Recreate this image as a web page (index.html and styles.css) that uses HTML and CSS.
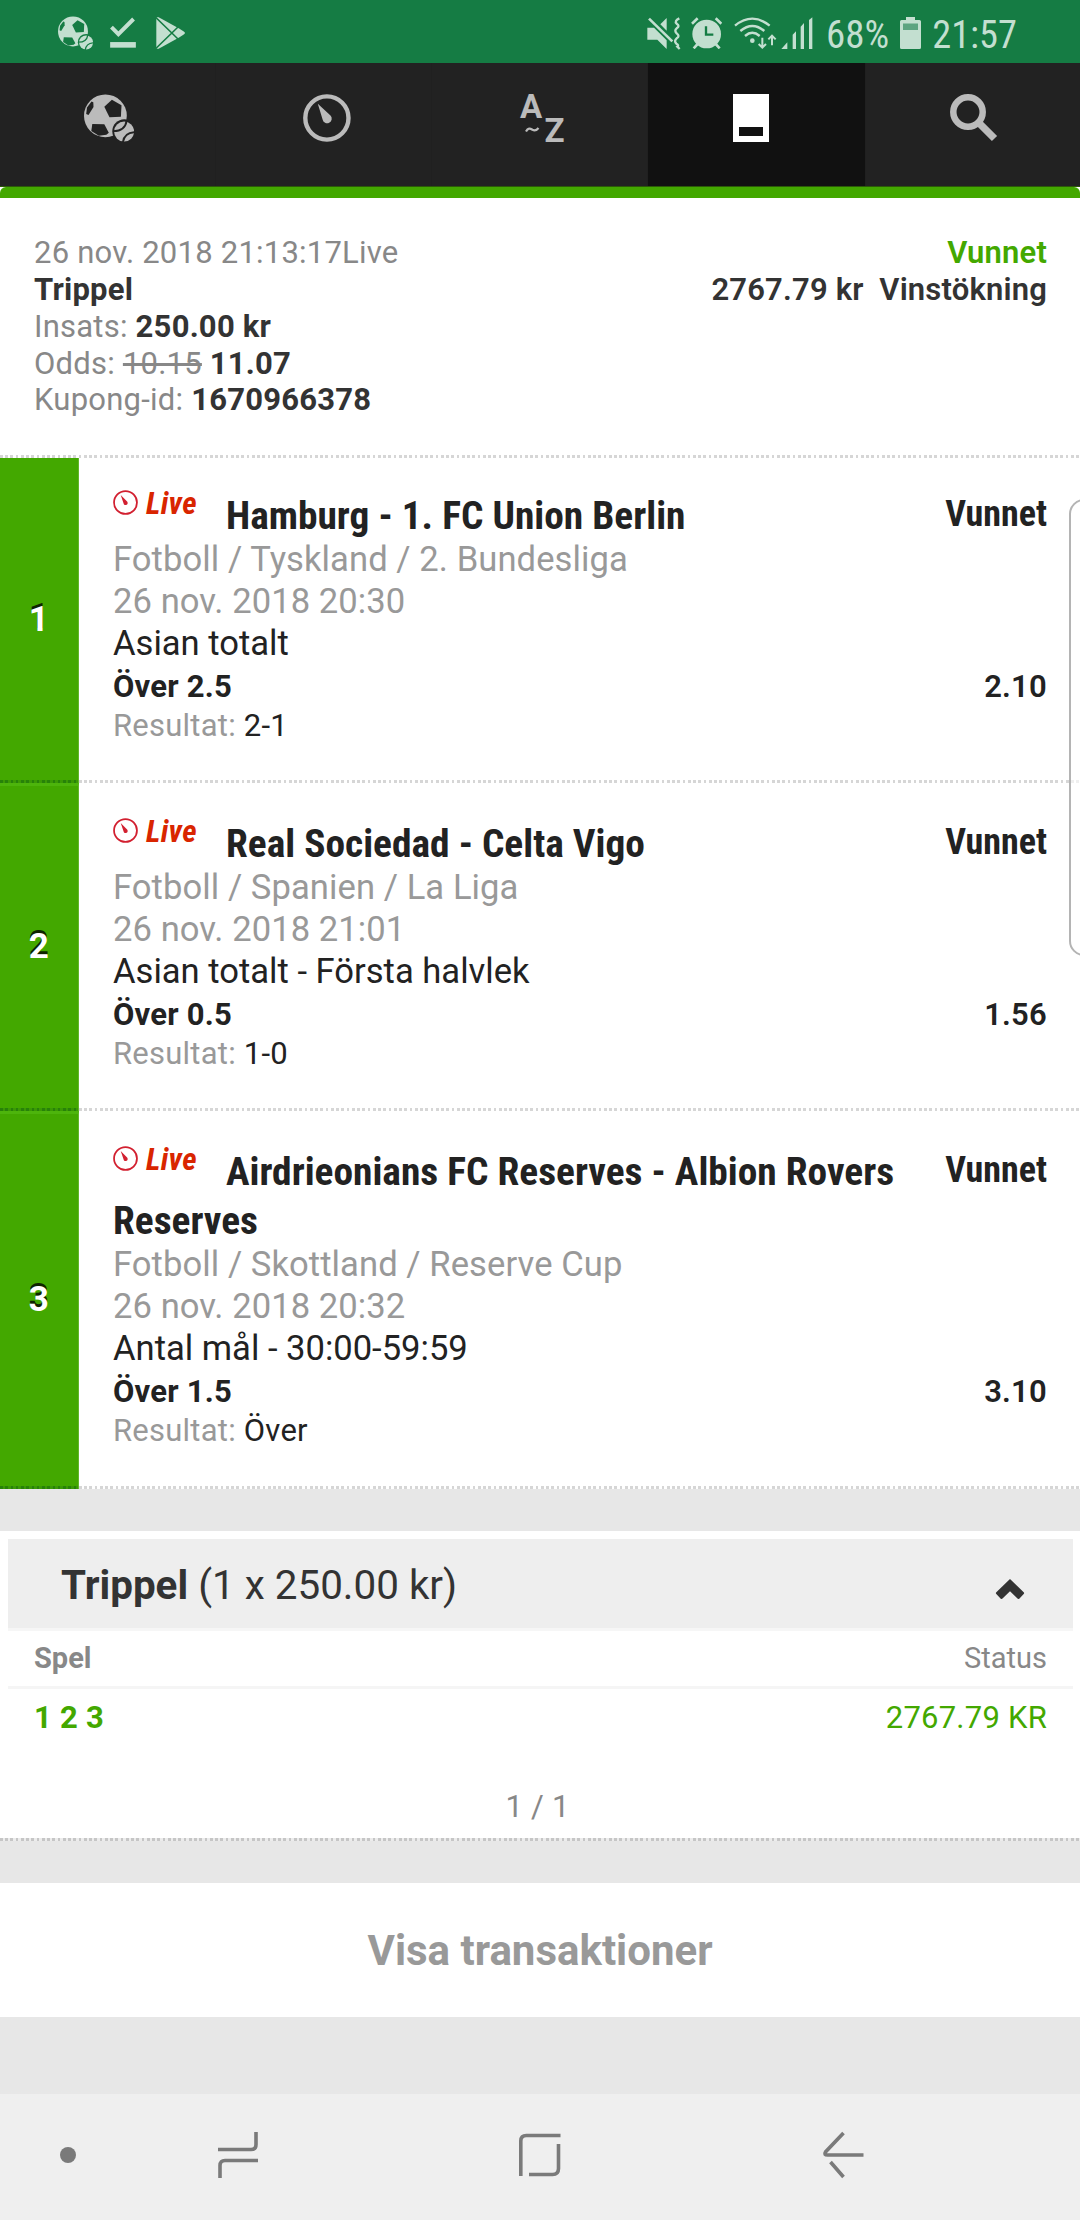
FILE: index.html
```html
<!DOCTYPE html>
<html lang="sv">
<head>
<meta charset="utf-8">
<title>Kupong</title>
<link rel="stylesheet" href="styles.css">
</head>
<body>
<svg class="defs" width="0" height="0">
  <symbol id="balls" viewBox="0 0 50 48">
    <circle cx="21.4" cy="21.8" r="21.4" fill="currentColor"/>
    <g class="cut">
      <path d="M27.9 5.7 37.5 11.3 36.9 22.7 25.5 23.3 20.3 12.7Z"/>
      <path d="M7.5 7.5 9.3 8.3 9.5 13 4.5 21 2.2 20 3 13.5Z"/>
      <path d="M8.3 30 20.3 30.3 24.8 38.7 22.4 40.7 14.8 41.7 7.3 37Z"/>
      <circle cx="40.3" cy="37.3" r="12"/>
    </g>
    <circle cx="40.1" cy="37.6" r="10" fill="currentColor"/>
    <path class="cut-line" d="M29.5 37.2Q41 37 42.6 27M38.8 49Q40 38.5 51 38.2" stroke-width="1.8"/>
  </symbol>
  <symbol id="gauge" viewBox="0 0 48 48">
    <circle cx="23.9" cy="24" r="21.6" fill="none" stroke="currentColor" stroke-width="4.4"/>
    <path d="M14.8 9.7 27.5 21.6A4.6 4.6 0 1 1 19.6 25.5Z" fill="currentColor"/>
  </symbol>
  <symbol id="gauge-thin" viewBox="0 0 48 48">
    <circle cx="24" cy="24" r="22" fill="none" stroke="currentColor" stroke-width="3.4"/>
    <path d="M14.8 9.7 26.6 21.8A4 4 0 1 1 20.2 25.5Z" fill="currentColor"/>
  </symbol>
</svg>

<header class="status">
  <svg class="s-balls" width="35" height="34"><use href="#balls"/></svg>
  <svg class="s-check" width="26" height="31" viewBox="180 36 78 94"><path d="M184 67 205 88 251 42" fill="none" stroke="currentColor" stroke-width="12"/><path d="M180 112h78v17h-78z" fill="currentColor"/></svg>
  <svg class="s-play" width="29" height="32" viewBox="317 35 87 96"><path d="M318 36H325L385 69Q404 80 404 83 404 86 385 97L325 130H318Z" fill="currentColor"/><path class="cut-line" d="M314 34 390 108M314 132 390 58" stroke-width="4.5"/></svg>
  <div class="s-right">
    <svg class="s-mute" width="34" height="33" viewBox="21 34 102 99"><g fill="currentColor"><path d="M22 66H42L80 104V130L52 102H22Z"/><path d="M61 56 80 37V75Z"/></g><g fill="none" stroke="currentColor"><path d="M27 39 97 107" stroke-width="8"/><path d="M118 38Q102 46 110 54 121 61 110 68 102 75 110 83 121 91 110 98 101 106 109 114 118 119 112 123L119 130" stroke-width="7"/></g></svg>
    <svg class="s-alarm" width="31" height="32" viewBox="154 35 93 96"><circle cx="201" cy="86" r="43" fill="currentColor"/><path d="M157 55 174 39M228 39 245 55M174 116 162 129M228 116 240 129" stroke="currentColor" stroke-width="8"/><path class="cut-line" d="M199 63V88H221" stroke-width="7"/></svg>
    <svg class="s-wifi" width="43" height="33" viewBox="284 34 129 99"><circle cx="339" cy="105" r="7" fill="currentColor"/><g fill="none" stroke="currentColor" stroke-width="7"><path d="M287 60Q339 18 391 60M303 76Q339 46 375 76M317 91Q339 72 361 91"/><path d="M369 96V126M358 115 369 126 380 115M398 119V90M387 101 398 90 409 101" stroke-width="6"/></g></svg>
    <svg class="s-signal" width="32" height="33" viewBox="427 35 96 99"><path d="M428 131 446 111V131ZM462 88 472 78V131H462ZM486 64 496 53V131H486ZM511 44 521 36V131H511Z" fill="currentColor"/></svg>
    <span class="s-pct">68%</span>
    <svg class="s-batt" width="21" height="32" viewBox="0 0 21 32"><path d="M6 0H15V3H19.5Q21 3 21 4.500V30.500Q21 32 19.500 32H1.500Q0 32 0 30.500V4.500Q0 3 1.500 3H6Z" fill="currentColor"/><path d="M3 6.500H18V13H3Z" fill="#5da481"/></svg>
    <span class="s-time">21:57</span>
  </div>
</header>

<nav class="tabs">
  <a class="tab t-ball"><svg width="50" height="48"><use href="#balls"/></svg></a>
  <a class="tab t-live"><svg width="48" height="48"><use href="#gauge"/></svg></a>
  <a class="tab t-az"><svg width="56" height="64" viewBox="-5 -8 56 64"><text x="1" y="24">A</text><text x="25.500" y="47.500">Z</text><path d="M7 37.500C9 33.500 11 34.200 13.500 35.800 16 37.300 17.500 36.500 19.500 34" fill="none" stroke="currentColor" stroke-width="2.200"/></svg></a>
  <a class="tab t-slip active"><svg width="36" height="48" viewBox="0 0 36 48"><path d="M0 0H36V48H0ZM6 33V42H30V33Z" fill="currentColor" fill-rule="evenodd"/></svg></a>
  <a class="tab t-search"><svg width="48" height="48" viewBox="0 0 48 48"><circle cx="18" cy="18" r="14.700" fill="none" stroke="currentColor" stroke-width="6.500"/><path d="M28 28 44.500 44.500" stroke="currentColor" stroke-width="7.400"/></svg></a>
</nav>
<div class="strip"><div class="strip-bar"></div></div>

<section class="summary">
  <div class="sum-left">
    <div>26 nov. 2018 21:13:17Live</div>
    <div><b>Trippel</b></div>
    <div>Insats: <b>250.00 kr</b></div>
    <div>Odds: <s>10.15</s> <b>11.07</b></div>
    <div>Kupong-id: <b>1670966378</b></div>
  </div>
  <div class="sum-right">
    <div class="won">Vunnet</div>
    <div>2767.79 kr&nbsp; Vinstökning</div>
  </div>
</section>
<div class="dots"></div>

<main class="bets">
  <article class="bet">
    <div class="num">1</div>
    <div class="info">
      <div class="head"><h2><span class="live"><svg width="25" height="25"><use href="#gauge-thin"/></svg><i>Live</i></span>Hamburg - 1. FC Union Berlin</h2><span class="res">Vunnet</span></div>
      <div class="meta">Fotboll / Tyskland / 2. Bundesliga</div>
      <div class="meta">26 nov. 2018 20:30</div>
      <div class="market">Asian totalt</div>
      <div class="pick"><span>Över 2.5</span><span>2.10</span></div>
      <div class="result">Resultat: <span>2-1</span></div>
    </div>
  </article>
  <article class="bet">
    <div class="num">2</div>
    <div class="info">
      <div class="head"><h2><span class="live"><svg width="25" height="25"><use href="#gauge-thin"/></svg><i>Live</i></span>Real Sociedad - Celta Vigo</h2><span class="res">Vunnet</span></div>
      <div class="meta">Fotboll / Spanien / La Liga</div>
      <div class="meta">26 nov. 2018 21:01</div>
      <div class="market">Asian totalt - Första halvlek</div>
      <div class="pick"><span>Över 0.5</span><span>1.56</span></div>
      <div class="result">Resultat: <span>1-0</span></div>
    </div>
  </article>
  <article class="bet">
    <div class="num">3</div>
    <div class="info">
      <div class="head"><h2><span class="live"><svg width="25" height="25"><use href="#gauge-thin"/></svg><i>Live</i></span>Airdrieonians FC Reserves - Albion Rovers Reserves</h2><span class="res">Vunnet</span></div>
      <div class="meta">Fotboll / Skottland / Reserve Cup</div>
      <div class="meta">26 nov. 2018 20:32</div>
      <div class="market">Antal mål - 30:00-59:59</div>
      <div class="pick"><span>Över 1.5</span><span>3.10</span></div>
      <div class="result">Resultat: <span>Över</span></div>
    </div>
  </article>
</main>

<section class="combo">
  <div class="panel">
    <div class="panel-head"><div><b>Trippel</b> (1 x 250.00 kr)</div>
      <svg width="30" height="21" viewBox="0 0 30 21"><path d="M15 0 28.700 13.200Q29.600 14 28.700 15L24.500 19.500Q23.500 20.600 22.500 19.600L15 12.300 7.500 19.600Q6.500 20.600 5.500 19.500L1.300 15Q.4 14 1.300 13.200Z" fill="#333"/></svg>
    </div>
    <div class="cols"><b>Spel</b><span>Status</span></div>
    <div class="line"><b>1 2 3</b><span>2767.79 KR</span></div>
    <div class="pager">1 / 1</div>
  </div>
</section>
<div class="dots grey"></div>

<button class="trans">Visa transaktioner</button>

<footer class="softkeys">
  <svg class="k-dot" width="16" height="16" viewBox="0 0 16 16"><circle cx="8" cy="8" r="8" fill="currentColor"/></svg>
  <svg class="k-recent" width="42" height="48" viewBox="0 0 42 48"><path d="M1 18.500H34Q39 18.500 39 13.500V1M41 29.500H8Q3 29.500 3 34.500V47"/></svg>
  <svg class="k-home" width="44" height="46" viewBox="0 0 44 46"><path d="M2.800 44V9Q2.800 3.500 8.300 3.500H42.500M11 42.500H34.500Q40.500 42.500 40.500 36.500V12"/></svg>
  <svg class="k-back" width="42" height="48" viewBox="0 0 42 48"><path d="M21.500 2 3.500 21Q1.500 24 5.500 24H41.500M8.500 31 21.500 46"/></svg>
</footer>
<div class="edge"></div>
</body>
</html>
```
FILE: styles.css
```css
* { box-sizing: border-box; }
body {
  margin: 0;
  width: 1080px;
  height: 2220px;
  display: flex;
  flex-direction: column;
  background: #e7e7e7;
  font-family: Roboto, "Liberation Sans", sans-serif;
  font-size: 31px;
  letter-spacing: 0.23px;
  color: #333;
  position: relative;
  overflow: hidden;
}
body > * { flex: none; }
svg { display: block; flex: none; }
.defs { position: absolute; }
.cut { fill: var(--bg); }
.cut-line { fill: none; stroke: var(--bg); }

/* system status bar */
.status {
  --bg: #157c44;
  height: 63px;
  padding: 16px 63px 0 58px;
  display: flex;
  align-items: flex-start;
  background: #157c44;
  color: #c3dfd0;
}
.s-check { margin: 1px 0 0 17px; }
.s-play { margin: 1px 0 0 20px; }
.s-right { margin-left: auto; display: flex; align-items: flex-start; }
.s-mute, .s-alarm, .s-wifi, .s-signal, .s-batt { margin-top: 1px; }
.s-alarm { margin-left: 10px; }
.s-wifi { margin-left: 12px; }
.s-signal { margin-left: 4px; }
.s-pct, .s-time {
  font-size: 39px;
  font-stretch: 75%;
  letter-spacing: 0;
  line-height: 38px;
}
.s-pct { margin-left: 13px; }
.s-batt { margin-left: 11px; }
.s-time { margin-left: 11px; font-size: 38.4px; }

/* section tabs */
.tabs { display: flex; height: 123px; background: #222; color: #bbb; }
.tab {
  --bg: #222;
  flex: none;
  width: 216px;
  display: flex;
  justify-content: center;
  align-items: flex-start;
  padding-top: 31px;
  border-right: 1px solid #202020;
}
.tab:last-child { width: 214px; border-right: 0; }
.tab.active { width: 218px; background: #111; color: #fff; }
.t-ball { padding-left: 3px; }
.t-live { padding-left: 6px; }
.t-az { padding: 23px 0 0 4px; }
.t-slip { padding-right: 11px; }
.t-search { padding-left: 2px; }
.t-az text { font: 700 33px Roboto, sans-serif; fill: currentColor; letter-spacing: 0; }
.strip { background: #fff; height: 12px; border-top: 1px solid #2c5a08; }
.strip-bar { height: 11px; background: #43a800; border-radius: 6px 6px 0 0; }

/* coupon summary */
.summary {
  height: 257px;
  padding: 37.2px 33px 0 34px;
  display: flex;
  justify-content: space-between;
  background: #fff;
  color: #888;
  line-height: 36.8px;
}
.summary b { color: #333; }
.sum-right { text-align: right; color: #333; font-weight: 600; letter-spacing: 0.18px; }
.won { color: #43a800; }
.dots {
  height: 3px;
  background: repeating-linear-gradient(90deg, #d6d6d6 0 2.62px, #fff 2.62px 5.25px);
}
.dots.grey { background: repeating-linear-gradient(90deg, #c6c6c6 0 2.62px, #ececec 2.62px 5.25px); }

/* bets */
.bet { display: flex; background: #fff; height: 325px; }
.bet + .bet { height: 328px; }
.bet:last-child { height: 378px; }
.num {
  width: 79px;
  display: flex;
  align-items: center;
  justify-content: center;
  padding-bottom: 3px;
  background:
    repeating-linear-gradient(90deg, #278209 0 2.62px, #3a9a04 2.62px 5.25px) bottom / 100% 3px no-repeat,
    #43a800;
  border-right: 1px solid #62b62c;
  color: #fff;
  font-size: 35px;
  font-weight: 700;
  text-shadow: 0 -3px 0 rgba(0, 0, 0, 0.8);
}
.bet + .bet .num { border-top: 3px solid #4db40c; padding-bottom: 4px; }
.info {
  flex: 1;
  padding: 33px 33px 0 34px;
  background: repeating-linear-gradient(90deg, #d6d6d6 0 2.62px, #fff 2.62px 5.25px) bottom / 100% 3px no-repeat;
  color: #222;
}
.bet + .bet .info { padding-top: 36px; }
.head { display: flex; justify-content: space-between; margin-bottom: -2px; }
h2 {
  margin: 0;
  width: 800px;
  font-size: 39.4px;
  font-weight: 700;
  font-stretch: 75%;
  line-height: 49px;
  letter-spacing: 0;
}
.live {
  display: inline-flex;
  gap: 8px;
  width: 113px;
  height: 25px;
  margin: -12px 0 -6px;
  vertical-align: 14px;
  line-height: 25px;
  font-size: 31px;
  color: #d92500;
}
.live svg { color: #d22030; }
.live i { line-height: 28px; letter-spacing: 0.3px; }
.res {
  margin-top: -1px;
  font-size: 36px;
  font-weight: 700;
  font-stretch: 75%;
  line-height: 49px;
  letter-spacing: 0;
}
.meta, .market { font-size: 34.6px; line-height: 42px; letter-spacing: 0; }
.meta { color: #999; letter-spacing: 0.07px; }
.pick { display: flex; justify-content: space-between; font-weight: 700; line-height: 45px; }
.pick span + span { font-weight: 600; }
.result { line-height: 34px; color: #999; }
.result span { color: #222; }

/* combination table */
.combo { margin-top: 42px; height: 307px; padding: 8px 7px 8px 8px; background: #fff; }
.panel { height: 291px; }
.panel-head {
  display: flex;
  justify-content: space-between;
  align-items: center;
  height: 92px;
  padding: 4px 48px 0 53px;
  background: #eee;
  border-bottom: 3px solid #f6f6f6;
  font-size: 40.4px;
  letter-spacing: 0;
}
.panel-head svg { margin-top: 8px; }
.cols, .line { display: flex; justify-content: space-between; padding: 0 26px; }
.cols {
  height: 58px;
  border-bottom: 3px solid #f5f5f5;
  color: #888;
  font-size: 29px;
  line-height: 55px;
  letter-spacing: 0;
}
.line { color: #43a800; line-height: 57px; }
.pager { margin-top: 42px; text-align: center; color: #888; line-height: 37px; padding-right: 6px; }

.trans {
  margin: 42px 0 0;
  padding: 0;
  border: 0;
  height: 134px;
  background: #fff;
  color: #999;
  font: 700 42px Roboto, sans-serif;
}

/* navigation keys */
.softkeys {
  margin-top: auto;
  height: 126px;
  display: flex;
  align-items: flex-start;
  padding-left: 60px;
  background: #efefef;
  color: #7a7a7a;
}
.softkeys path { fill: none; stroke: currentColor; stroke-width: 3.6; }
.k-dot { margin-top: 53px; }
.k-recent { margin: 37px 0 0 141px; }
.k-home { margin: 38px 0 0 259px; }
.k-back { margin: 37px 0 0 260px; }

/* edge panel handle */
.edge {
  position: absolute;
  left: 1069px;
  top: 499px;
  width: 30px;
  height: 457px;
  border: 2px solid #b4b4b4;
  border-radius: 15px;
  background: rgba(255, 255, 255, 0.6);
}
```
